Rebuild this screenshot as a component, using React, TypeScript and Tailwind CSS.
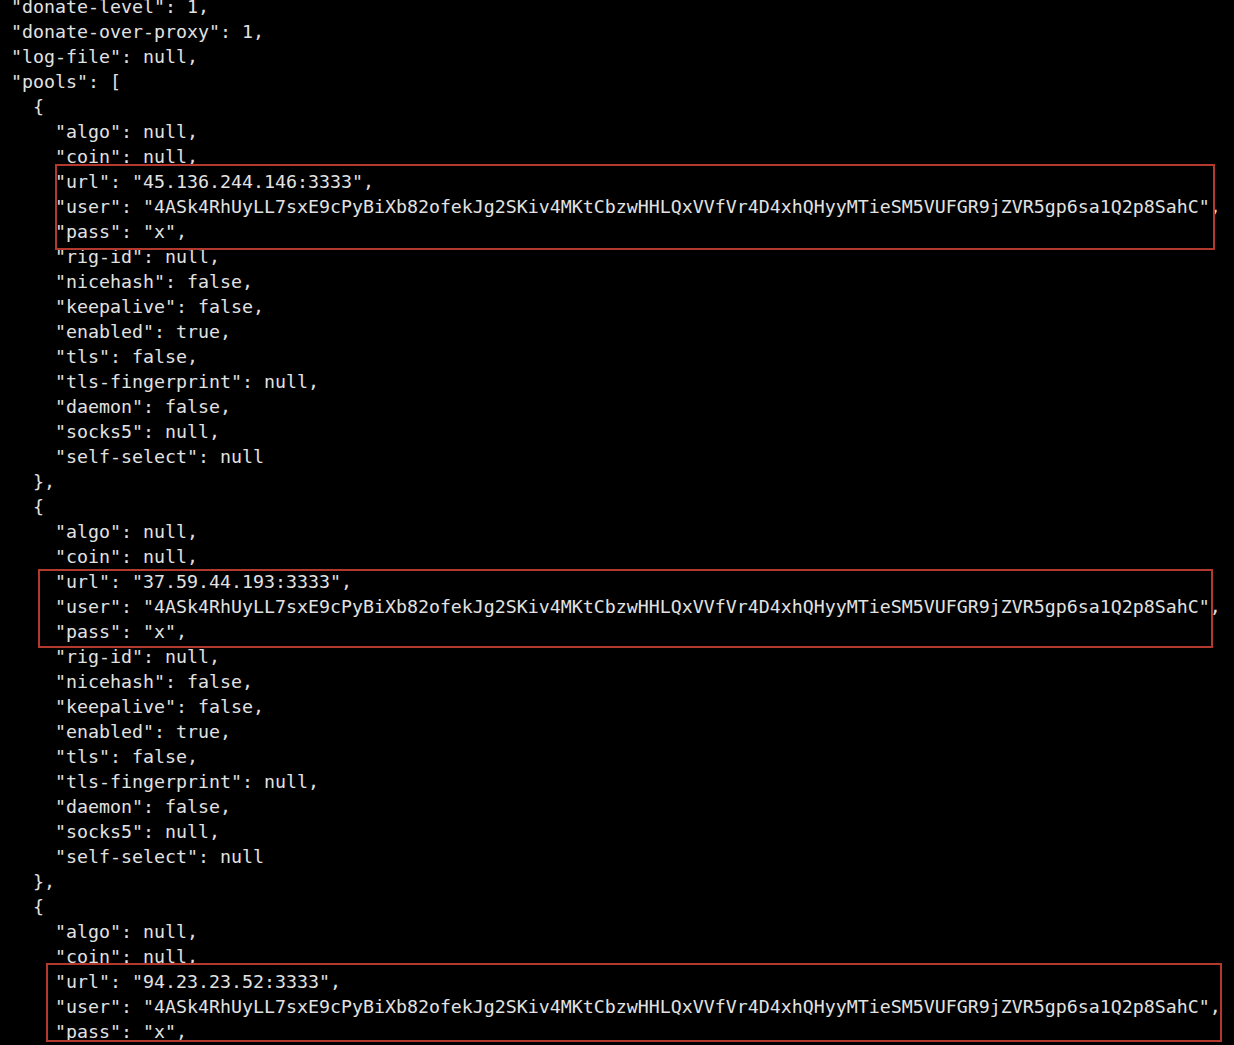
const ADDR =
  "4ASk4RhUyLL7sxE9cPyBiXb82ofekJg2SKiv4MKtCbzwHHLQxVVfVr4D4xhQHyyMTieSM5VUFGR9jZVR5gp6sa1Q2p8SahC";

function pool(url: string, last: boolean) {
  return [
    `  {`,
    `    "algo": null,`,
    `    "coin": null,`,
    `    "url": "${url}",`,
    `    "user": "${ADDR}",`,
    `    "pass": "x",`,
    `    "rig-id": null,`,
    `    "nicehash": false,`,
    `    "keepalive": false,`,
    `    "enabled": true,`,
    `    "tls": false,`,
    `    "tls-fingerprint": null,`,
    `    "daemon": false,`,
    `    "socks5": null,`,
    `    "self-select": null`,
    last ? `  }` : `  },`,
  ];
}

const lines = [
  `"donate-level": 1,`,
  `"donate-over-proxy": 1,`,
  `"log-file": null,`,
  `"pools": [`,
  ...pool("45.136.244.146:3333", false),
  ...pool("37.59.44.193:3333", false),
  ...pool("94.23.23.52:3333", true),
];

export default function App() {
  return (
    <div className="relative h-[1045px] w-[1234px] overflow-hidden bg-black">
      <pre className="-mt-[6px] pl-[11px] font-['DejaVu_Sans_Mono','Liberation_Mono',monospace] text-[18.27px] leading-[25px] text-[#e2e2e2] whitespace-pre">
        {lines.join("\n")}
      </pre>

      {/* annotation boxes */}
      <div className="absolute left-[55px] top-[164px] h-[86px] w-[1160px] border-2 border-[#b3392e]" />
      <div className="absolute left-[38px] top-[569px] h-[79px] w-[1175px] border-2 border-[#b3392e]" />
      <div className="absolute left-[46px] top-[963px] h-[79px] w-[1176px] border-2 border-[#b3392e]" />
    </div>
  );
}
